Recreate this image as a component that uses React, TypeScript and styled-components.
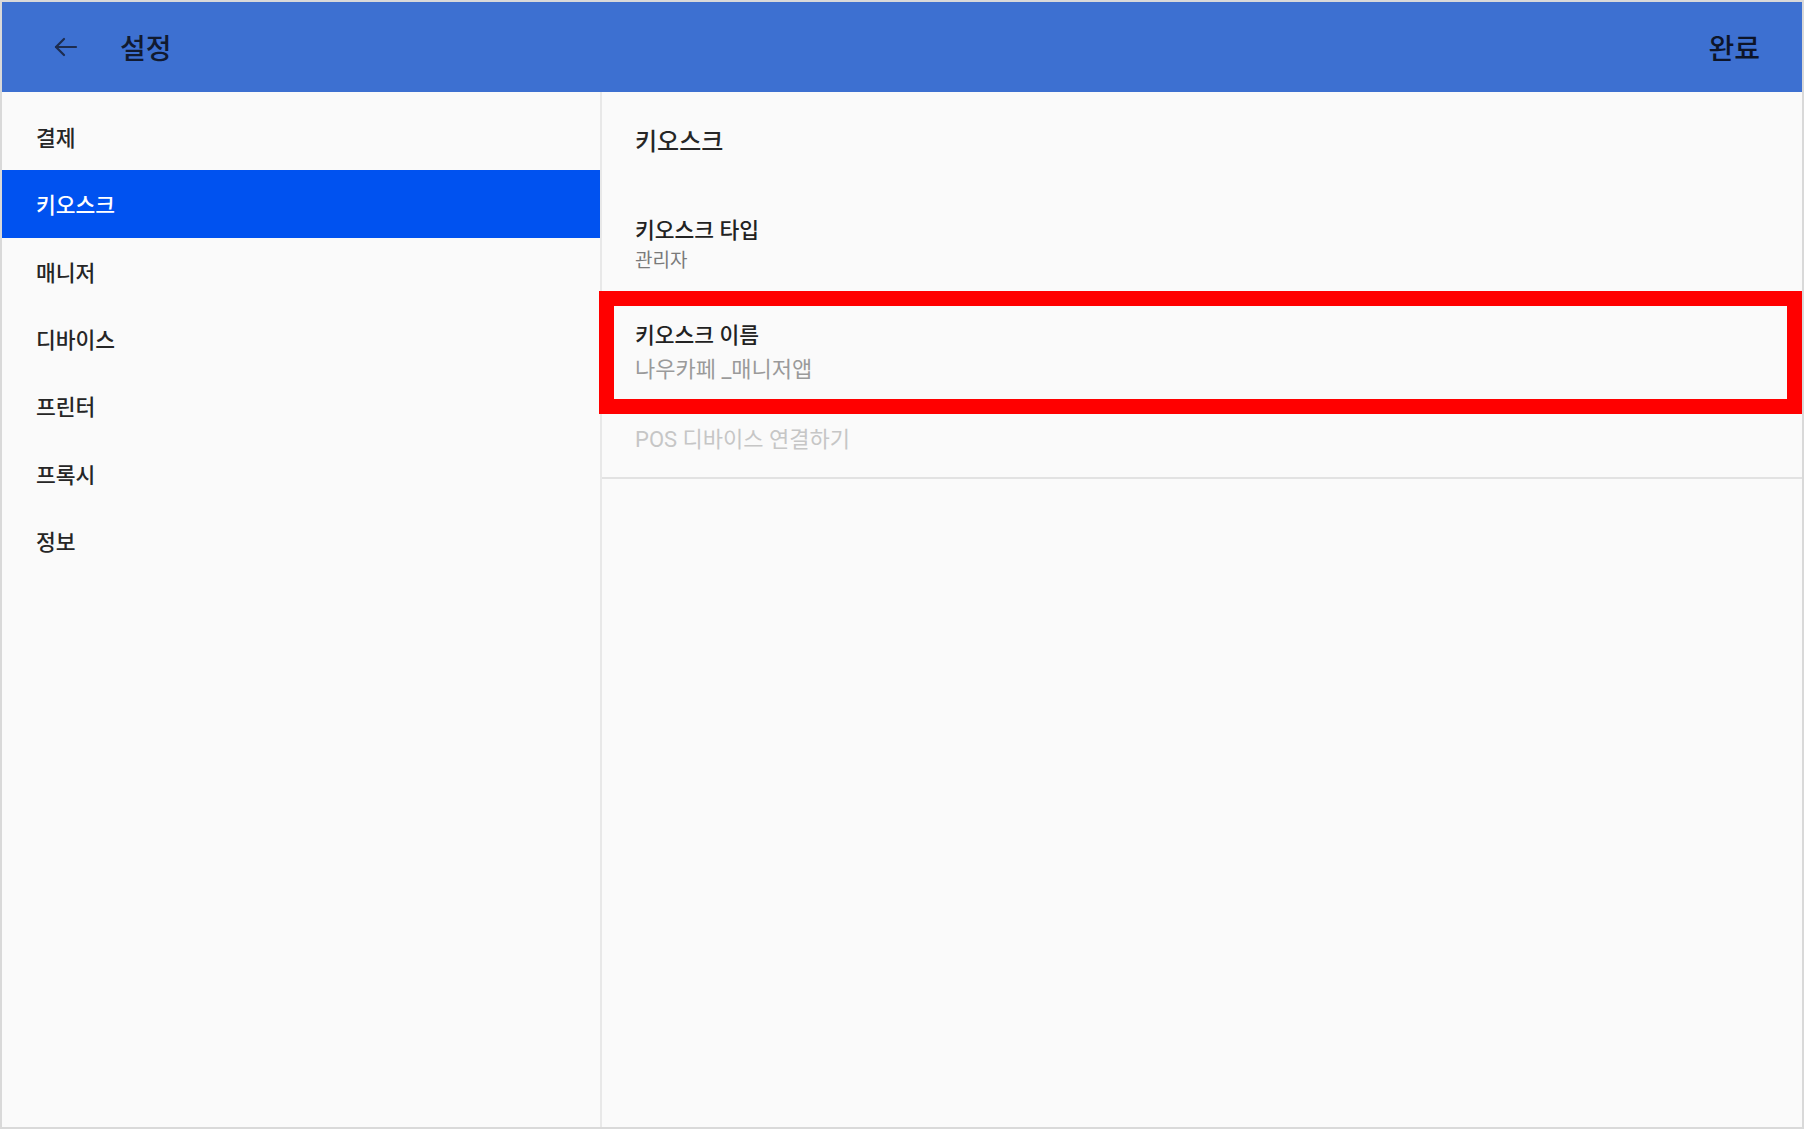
import React from "react";
import styled, { createGlobalStyle } from "styled-components";

const FONT = `Roboto, "Noto Sans CJK KR", "Noto Sans", sans-serif`;

const GlobalStyle = createGlobalStyle`
    html, body {
        margin: 0;
        padding: 0;
        background: #fafafa;
    }
    * {
        box-sizing: border-box;
    }
`;

const Frame = styled.div`
    width: 1804px;
    height: 1129px;
    border: 2px solid #d9d9d9;
    background: #fafafa;
    display: flex;
    flex-direction: column;
    font-family: ${FONT};
    overflow: hidden;
`;

const TopBar = styled.header`
    height: 90px;
    flex-shrink: 0;
    background: #3d70d1;
    display: flex;
    align-items: center;
    padding: 0 42px 0 50px;
`;

const BackButton = styled.button`
    width: 28px;
    height: 28px;
    padding: 0;
    border: none;
    background: none;
    display: flex;
    align-items: center;
    justify-content: center;
    color: #1d2c4f;
`;

const Title = styled.h1`
    margin: 0 0 0 40px;
    font-size: 28px;
    font-weight: 500;
    color: #111a30;
    flex: 1;
`;

const DoneButton = styled.button`
    border: none;
    background: none;
    padding: 0;
    font-family: ${FONT};
    font-size: 28px;
    font-weight: 500;
    color: #0d1428;
`;

const Body = styled.div`
    flex: 1;
    display: flex;
    min-height: 0;
`;

const Sidebar = styled.nav`
    width: 600px;
    flex-shrink: 0;
    border-right: 2px solid #e8e8e8;
    padding-top: 11px;
    display: flex;
    flex-direction: column;
`;

const MenuItem = styled.div<{ $active?: boolean }>`
    height: 67.3px;
    display: flex;
    align-items: center;
    padding-left: 34px;
    font-size: 21.5px;
    font-weight: 500;
    color: ${({ $active }) => ($active ? "#ffffff" : "#262626")};
    background: ${({ $active }) => ($active ? "#0052f0" : "transparent")};
`;

const Content = styled.main`
    flex: 1;
    display: flex;
    flex-direction: column;
`;

const SectionHeader = styled.div`
    height: 93px;
    padding: 34px 0 0 33px;
    font-size: 24px;
    line-height: 32px;
    font-weight: 500;
    color: #262626;
`;

const SettingItem = styled.div<{ $highlight?: boolean }>`
    display: flex;
    flex-direction: column;
    padding-left: ${({ $highlight }) => ($highlight ? "21px" : "33px")};
    margin-left: ${({ $highlight }) => ($highlight ? "-3px" : "0")};
    border: ${({ $highlight }) => ($highlight ? "15px solid #ff0000" : "none")};
`;

const ItemTitle = styled.div`
    font-size: 21.5px;
    line-height: 30px;
    font-weight: 500;
    color: #222222;
`;

const ItemValue = styled.div<{ $large?: boolean }>`
    font-size: ${({ $large }) => ($large ? "22px" : "19px")};
    line-height: ${({ $large }) => ($large ? "38px" : "30px")};
    color: ${({ $large }) => ($large ? "#9a9a9a" : "#7a7a7a")};
`;

const LinkRow = styled.div`
    height: 65px;
    padding: 11px 0 0 33px;
    font-size: 22px;
    line-height: 30px;
    color: #c6c6c6;
    border-bottom: 2px solid #e2e2e2;
`;

const ArrowBack = () => (
    <svg width="26" height="24" viewBox="0 0 26 24" fill="none" stroke="currentColor" strokeWidth="2.2" strokeLinecap="round" strokeLinejoin="round">
        <path d="M23 12H3" />
        <path d="M11 4L3 12l8 8" />
    </svg>
);

const MENU = ["결제", "키오스크", "매니저", "디바이스", "프린터", "프록시", "정보"];

const App = () => {
    return (
        <>
            <GlobalStyle />
            <Frame>
                <TopBar>
                    <BackButton aria-label="back">
                        <ArrowBack />
                    </BackButton>
                    <Title>설정</Title>
                    <DoneButton>완료</DoneButton>
                </TopBar>
                <Body>
                    <Sidebar>
                        {MENU.map((label) => (
                            <MenuItem key={label} $active={label === "키오스크"}>
                                {label}
                            </MenuItem>
                        ))}
                    </Sidebar>
                    <Content>
                        <SectionHeader>키오스크</SectionHeader>
                        <SettingItem style={{ height: 106, paddingTop: 31 }}>
                            <ItemTitle>키오스크 타입</ItemTitle>
                            <ItemValue>관리자</ItemValue>
                        </SettingItem>
                        <SettingItem $highlight style={{ height: 123, paddingTop: 15 }}>
                            <ItemTitle>키오스크 이름</ItemTitle>
                            <ItemValue $large>나우카페 _매니저앱</ItemValue>
                        </SettingItem>
                        <LinkRow>POS 디바이스 연결하기</LinkRow>
                    </Content>
                </Body>
            </Frame>
        </>
    );
};

export default App;
